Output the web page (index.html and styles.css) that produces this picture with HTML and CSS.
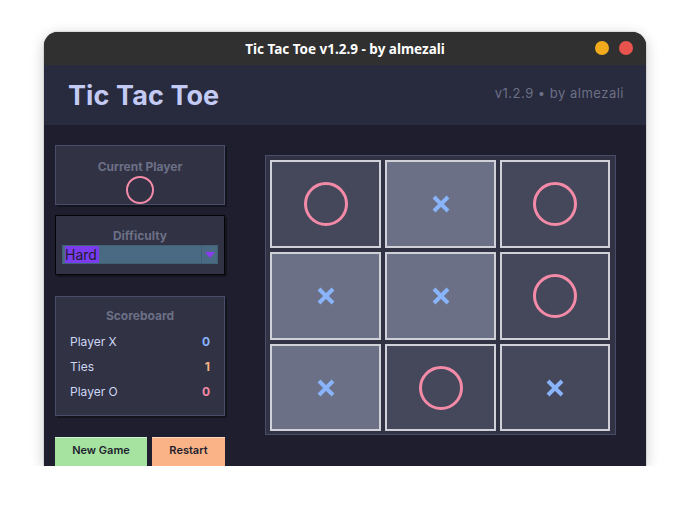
FILE: index.html
```html
<!DOCTYPE html>
<html>
<head>
<meta charset="utf-8">
<link rel="stylesheet" href="styles.css">
</head>
<body>
<div class="window">
  <div class="titlebar">
    <span class="wtitle">Tic Tac Toe v1.2.9 - by almezali</span>
    <div class="wbtns"><span class="dot min"></span><span class="dot close"></span></div>
  </div>
  <div class="header">
    <h1 class="apptitle">Tic Tac Toe</h1>
    <span class="ver">v1.2.9 • by almezali</span>
  </div>
  <div class="main">
    <div class="side">
      <div class="panel current">
        <div class="plabel">Current Player</div>
        <div class="cur-o"></div>
      </div>
      <div class="panel diff">
        <div class="plabel">Difficulty</div>
        <div class="combo">
          <div class="combo-text"><span class="sel">Hard</span></div>
          <div class="combo-btn"><svg width="10" height="6" viewBox="0 0 10 6"><polygon points="0,0 10,0 5,6" fill="#8b3cf0"/></svg></div>
        </div>
      </div>
      <div class="panel score">
        <div class="plabel">Scoreboard</div>
        <div class="srow"><span>Player X</span><span class="v vx">0</span></div>
        <div class="srow"><span>Ties</span><span class="v vt">1</span></div>
        <div class="srow"><span>Player O</span><span class="v vo">0</span></div>
      </div>
      <div class="btns">
        <div class="btn new">New Game</div>
        <div class="btn restart">Restart</div>
      </div>
    </div>
    <div class="board">
      <div class="cell dark"><span class="o"></span></div>
      <div class="cell light"><svg class="x" viewBox="0 0 18 18"><path d="M2 2L16 16M16 2L2 16" stroke="#89b4fa" stroke-width="4"/></svg></div>
      <div class="cell dark"><span class="o"></span></div>
      <div class="cell light"><svg class="x" viewBox="0 0 18 18"><path d="M2 2L16 16M16 2L2 16" stroke="#89b4fa" stroke-width="4"/></svg></div>
      <div class="cell light"><svg class="x" viewBox="0 0 18 18"><path d="M2 2L16 16M16 2L2 16" stroke="#89b4fa" stroke-width="4"/></svg></div>
      <div class="cell dark"><span class="o"></span></div>
      <div class="cell light"><svg class="x" viewBox="0 0 18 18"><path d="M2 2L16 16M16 2L2 16" stroke="#89b4fa" stroke-width="4"/></svg></div>
      <div class="cell dark"><span class="o"></span></div>
      <div class="cell dark"><svg class="x" viewBox="0 0 18 18"><path d="M2 2L16 16M16 2L2 16" stroke="#89b4fa" stroke-width="4"/></svg></div>
    </div>
  </div>
</div>
</body>
</html>
```

FILE: styles.css
```css
* { box-sizing: border-box; }
html, body { margin: 0; padding: 0; background: #ffffff; }
body { font-family: Inter, "Noto Sans", sans-serif; }

.window {
  margin: 32px 0 0 44px;
  width: 602px;
  height: 434px;
  border-radius: 14px 14px 0 0;
  overflow: hidden;
  background: #1e1e2e;
  box-shadow: 0 3px 14px rgba(0,0,0,0.22), 0 0 0 1px rgba(0,0,0,0.08);
  display: flex;
  flex-direction: column;
}

.titlebar {
  height: 33px;
  flex: none;
  background: #303030;
  display: flex;
  align-items: center;
  justify-content: center;
  position: relative;
}
.wtitle {
  font-family: "Noto Sans", sans-serif;
  font-weight: 700;
  font-size: 13.5px;
  color: #ffffff;
}
.wbtns {
  position: absolute;
  right: 13px;
  top: 9px;
  display: flex;
  gap: 10px;
}
.dot { width: 14px; height: 14px; border-radius: 50%; display: block; }
.dot.min { background: #f2ab1c; }
.dot.close { background: #e8534d; }

.header {
  height: 60px;
  flex: none;
  background: #282a3e;
  display: flex;
  align-items: center;
  justify-content: space-between;
  padding: 0 22px 0 24px;
}
.apptitle {
  margin: 0;
  font-size: 27px;
  font-weight: 700;
  color: #c3cbf5;
  letter-spacing: 0.1px;
}
.ver {
  font-size: 13px;
  letter-spacing: 0.5px;
  color: #6c7086;
  margin-top: -4px;
}

.main {
  flex: 1;
  display: flex;
  padding: 20px 0 0 11px;
  gap: 40px;
}
.side {
  width: 170px;
  display: flex;
  flex-direction: column;
}
.panel {
  background: #313244;
  border: 1px solid #4a4d69;
  box-shadow: 2px 2px 0 #14141f;
  display: flex;
  flex-direction: column;
  align-items: center;
}
.plabel {
  font-size: 12px;
  font-weight: 700;
  color: #6c7086;
}
.current { height: 60px; padding-top: 13px; }
.cur-o {
  width: 28px; height: 28px;
  border: 2px solid #f38ba8;
  border-radius: 50%;
  margin-top: 2px;
}
.diff {
  margin-top: 10px;
  height: 60px;
  border-color: #050508;
  padding-top: 12px;
}
.combo {
  margin-top: 2px;
  width: 156px;
  height: 19px;
  display: flex;
  border: 1px solid #3f6173;
  background: #4a6a84;
}
.combo-text {
  flex: 1;
  padding: 0 2px;
  border-right: 1px solid #3f6173;
  display: flex;
}
.sel {
  display: block;
  height: 17px;
  background: #7b3cf0;
  color: #1e1e2e;
  font-size: 14px;
  line-height: 17px;
  padding-right: 2px;
}
.combo-btn {
  width: 15px;
  display: flex;
  align-items: center;
  justify-content: center;
}
.score {
  margin-top: 21px;
  height: 120px;
  padding: 11px 14px 0 14px;
  align-items: stretch;
}
.score .plabel { text-align: center; margin-bottom: 11px; }
.srow {
  display: flex;
  justify-content: space-between;
  font-size: 12px;
  color: #cdd6f4;
  height: 25px;
  line-height: 16px;
}
.v { font-weight: 700; font-size: 12px; }
.vx { color: #89b4fa; }
.vt { color: #fab387; }
.vo { color: #f38ba8; }

.btns {
  margin-top: 21px;
  display: flex;
  gap: 5px;
}
.btn {
  height: 30px;
  font-size: 11px;
  font-weight: 600;
  color: #1e1e2e;
  text-align: center;
  padding-top: 5px;
  border-top: 1px solid rgba(255,255,255,0.5);
}
.btn.new { width: 92px; background: #a6e3a1; }
.btn.restart { width: 73px; background: #fab387; }

.board {
  margin-top: 10px;
  width: 351px;
  height: 280px;
  border: 1px solid #4a4d69;
  background: #313244;
  padding: 4px;
  display: grid;
  grid-template-columns: 111px 111px 110px;
  grid-template-rows: 88px 88px 87px;
  gap: 4px;
}
.cell {
  border: 2px solid #cfd0d8;
  display: flex;
  align-items: center;
  justify-content: center;
}
.cell.dark { background: #45475a; }
.cell.light { background: #6c7086; }
.o {
  width: 44px; height: 44px;
  border: 3px solid #f38ba8;
  border-radius: 50%;
  display: block;
}
.x { width: 18px; height: 18px; }
```
